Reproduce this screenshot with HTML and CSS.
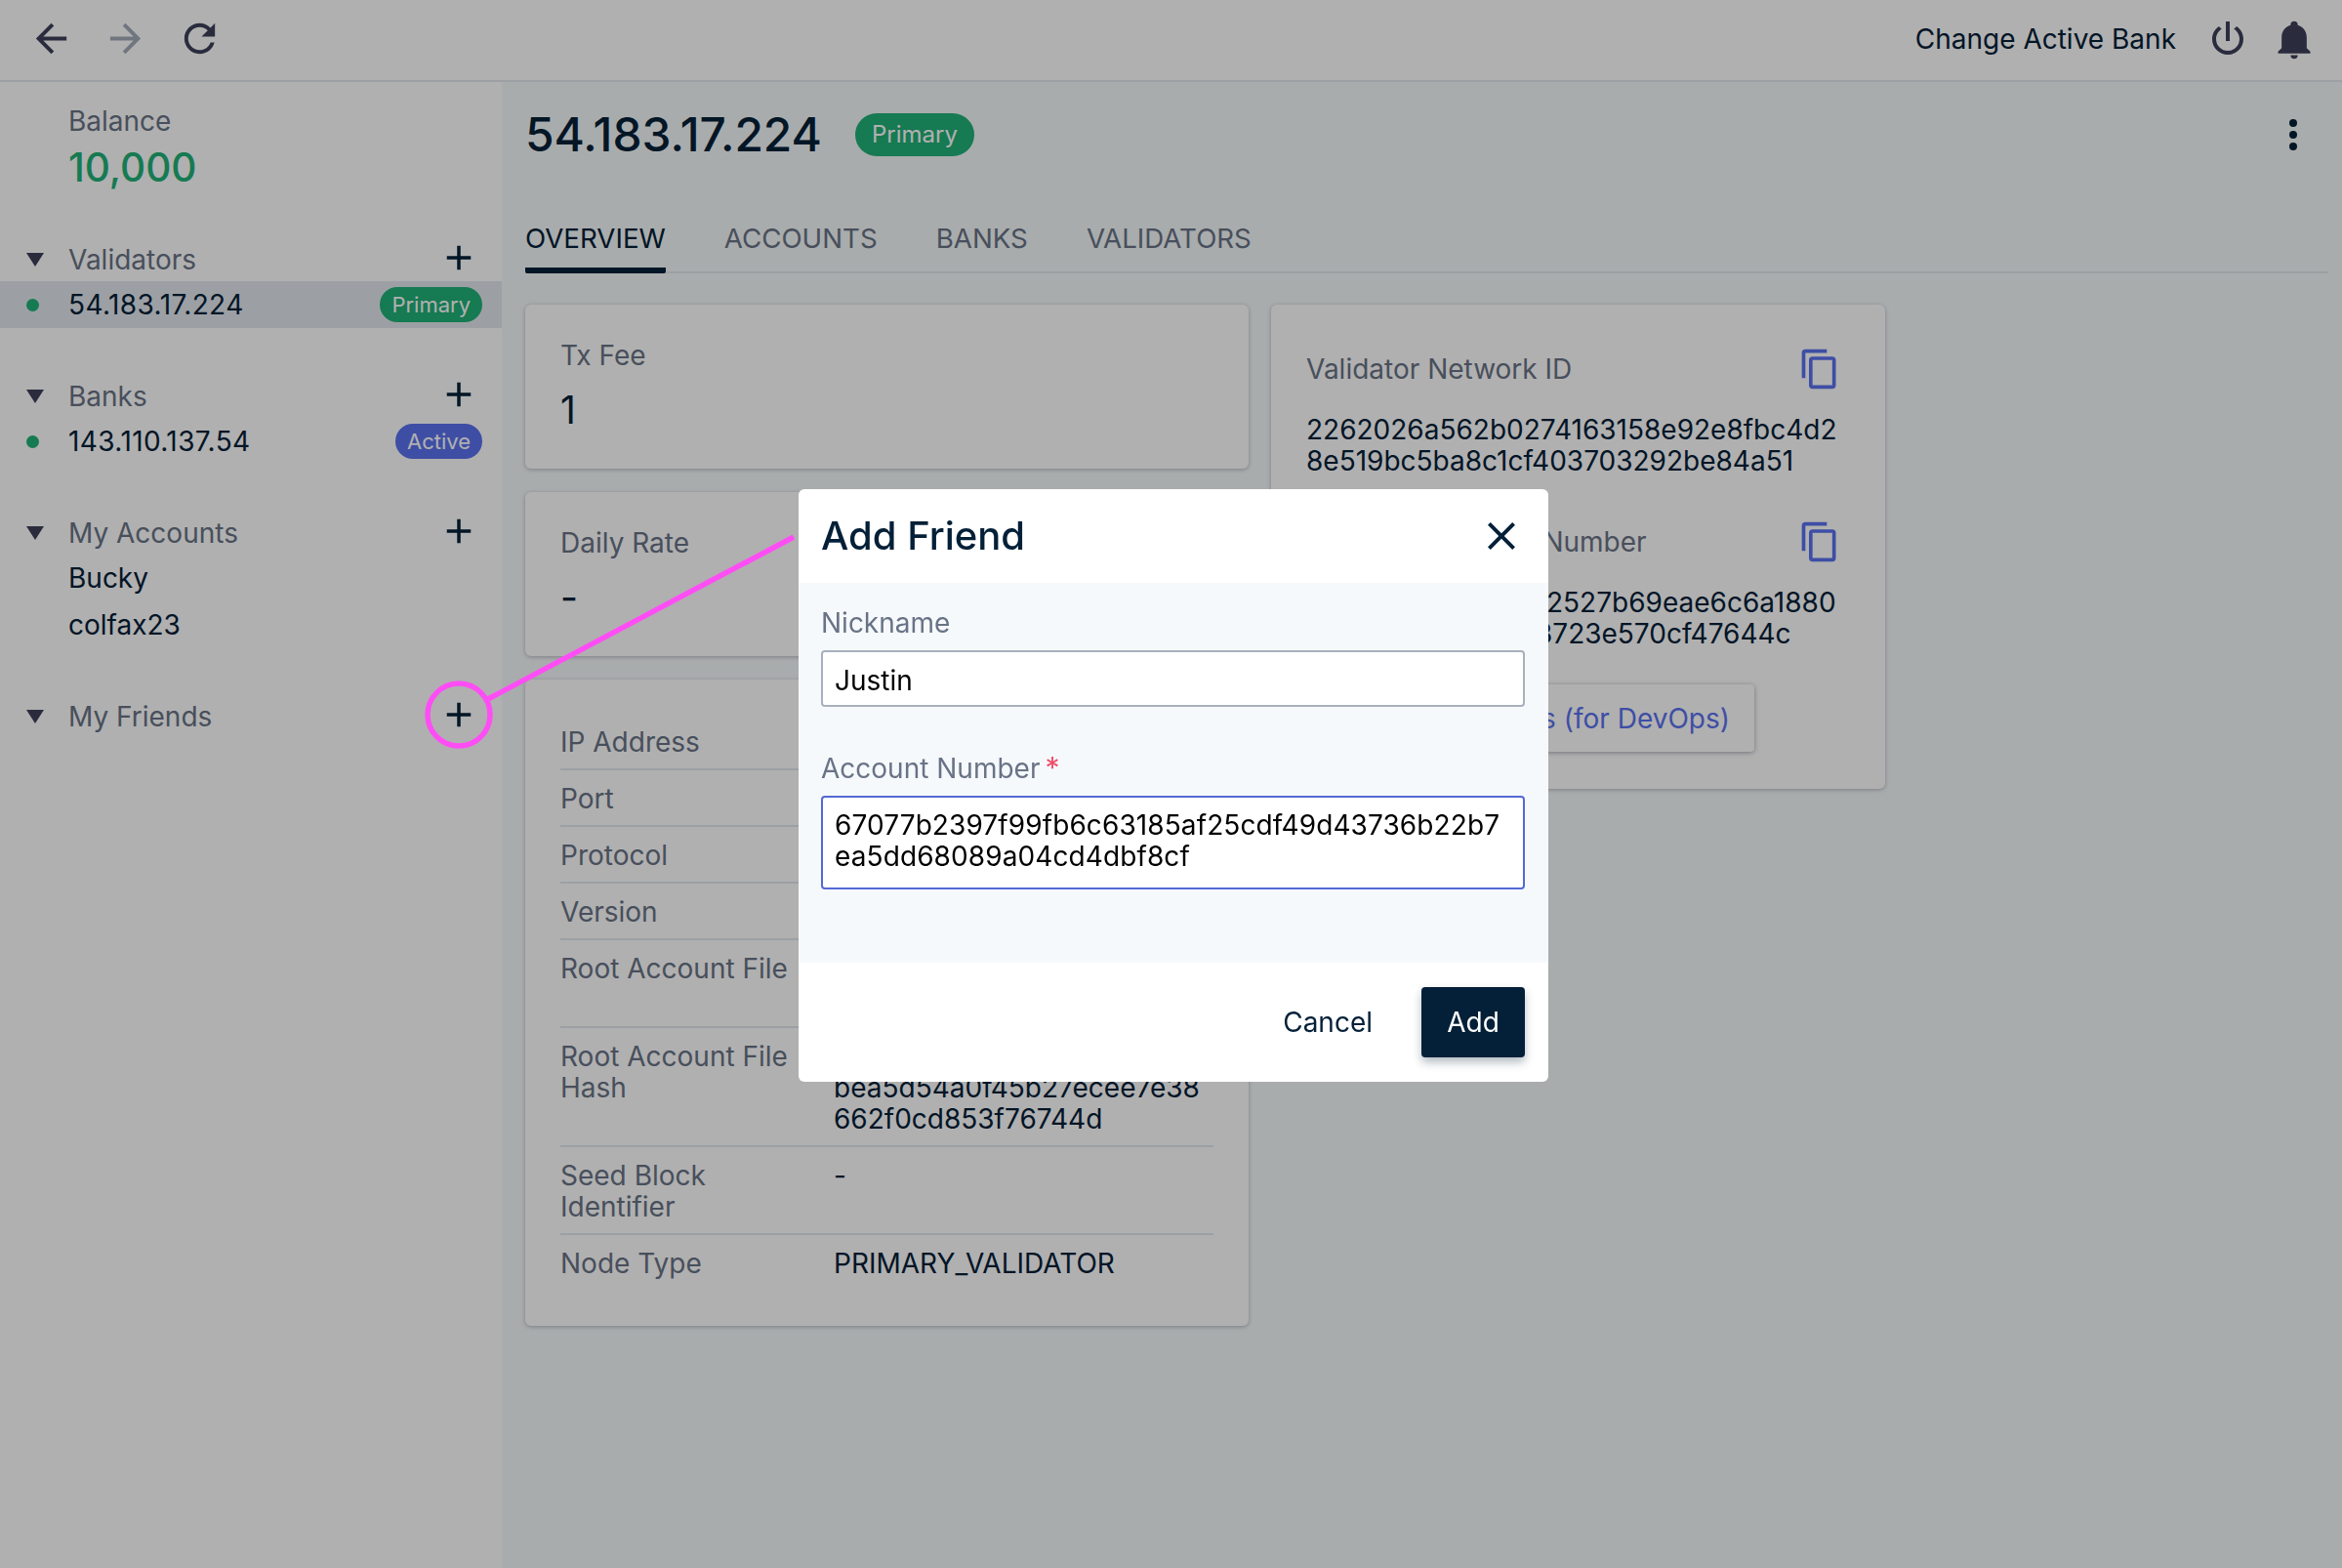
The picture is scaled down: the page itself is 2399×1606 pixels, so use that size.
FILE: index.html
```html
<!DOCTYPE html>
<html lang="en">
<head>
<meta charset="utf-8">
<title>Add Friend</title>
<link rel="stylesheet" href="styles.css">
</head>
<body>
<header class="topbar">
  <div class="topbar-nav">
    <svg class="icon icon-nav" viewBox="0 0 24 24"><path d="M20 11H7.83l5.59-5.59L12 4l-8 8 8 8 1.41-1.41L7.83 13H20v-2z"/></svg>
    <svg class="icon icon-nav icon-disabled" viewBox="0 0 24 24"><path d="M4 11h12.17l-5.59-5.59L12 4l8 8-8 8-1.41-1.41L16.17 13H4v-2z"/></svg>
    <svg class="icon icon-nav" viewBox="0 0 24 24"><path d="M17.65 6.35C16.2 4.9 14.21 4 12 4c-4.42 0-7.99 3.58-7.99 8s3.57 8 7.99 8c3.73 0 6.84-2.55 7.73-6h-2.08c-.82 2.33-3.04 4-5.65 4-3.31 0-6-2.69-6-6s2.69-6 6-6c1.66 0 3.14.69 4.22 1.78L13 11h7V4l-2.35 2.35z"/></svg>
  </div>
  <div class="topbar-actions">
    <span class="change-bank">Change Active Bank</span>
    <svg class="icon icon-power" viewBox="0 0 24 24"><path d="M16.56,5.44L15.11,6.89C16.84,7.94 18,9.83 18,12A6,6 0 0,1 12,18A6,6 0 0,1 6,12C6,9.83 7.16,7.94 8.88,6.88L7.44,5.44C5.36,6.88 4,9.28 4,12A8,8 0 0,0 12,20A8,8 0 0,0 20,12C20,9.28 18.64,6.88 16.56,5.44M13,3H11V13H13"/></svg>
    <svg class="icon icon-bell" viewBox="0 0 24 24"><path d="M21,19V20H3V19L5,17V11C5,7.9 7.03,5.17 10,4.29C10,4.19 10,4.1 10,4A2,2 0 0,1 12,2A2,2 0 0,1 14,4C14,4.1 14,4.19 14,4.29C16.97,5.17 19,7.9 19,11V17L21,19M14,21A2,2 0 0,1 12,23A2,2 0 0,1 10,21"/></svg>
  </div>
</header>

<div class="layout">
  <aside class="sidebar">
    <div class="balance">
      <div class="balance-label">Balance</div>
      <div class="balance-value">10,000</div>
    </div>

    <section class="side-section">
      <div class="side-head">
        <svg class="caret" viewBox="0 0 18 14"><path d="M0 0H18L9 14Z"/></svg>
        <span class="side-title">Validators</span>
        <svg class="icon icon-plus" viewBox="0 0 24 24"><path d="M19,13H13V19H11V13H5V11H11V5H13V11H19V13Z"/></svg>
      </div>
      <div class="side-item side-item-active">
        <span class="dot"></span>
        <span class="side-text side-text-num">54.183.17.224</span>
        <span class="badge badge-green">Primary</span>
      </div>
    </section>

    <section class="side-section">
      <div class="side-head">
        <svg class="caret" viewBox="0 0 18 14"><path d="M0 0H18L9 14Z"/></svg>
        <span class="side-title">Banks</span>
        <svg class="icon icon-plus" viewBox="0 0 24 24"><path d="M19,13H13V19H11V13H5V11H11V5H13V11H19V13Z"/></svg>
      </div>
      <div class="side-item">
        <span class="dot"></span>
        <span class="side-text side-text-num">143.110.137.54</span>
        <span class="badge badge-blue">Active</span>
      </div>
    </section>

    <section class="side-section">
      <div class="side-head">
        <svg class="caret" viewBox="0 0 18 14"><path d="M0 0H18L9 14Z"/></svg>
        <span class="side-title">My Accounts</span>
        <svg class="icon icon-plus" viewBox="0 0 24 24"><path d="M19,13H13V19H11V13H5V11H11V5H13V11H19V13Z"/></svg>
      </div>
      <div class="side-item"><span class="side-text side-text-plain">Bucky</span></div>
      <div class="side-item"><span class="side-text side-text-plain">colfax23</span></div>
    </section>

    <section class="side-section">
      <div class="side-head">
        <svg class="caret" viewBox="0 0 18 14"><path d="M0 0H18L9 14Z"/></svg>
        <span class="side-title">My Friends</span>
        <svg class="icon icon-plus" viewBox="0 0 24 24"><path d="M19,13H13V19H11V13H5V11H11V5H13V11H19V13Z"/></svg>
      </div>
    </section>
  </aside>

  <main class="main">
    <div class="page-head">
      <h1 class="page-title">54.183.17.224</h1>
      <span class="badge badge-green badge-large">Primary</span>
      <svg class="icon icon-dots" viewBox="0 0 24 24"><path d="M12,16A2,2 0 0,1 14,18A2,2 0 0,1 12,20A2,2 0 0,1 10,18A2,2 0 0,1 12,16M12,10A2,2 0 0,1 14,12A2,2 0 0,1 12,14A2,2 0 0,1 10,12A2,2 0 0,1 12,10M12,4A2,2 0 0,1 14,6A2,2 0 0,1 12,8A2,2 0 0,1 10,6A2,2 0 0,1 12,4Z"/></svg>
    </div>

    <nav class="tabs">
      <span class="tab tab-active">OVERVIEW</span>
      <span class="tab">ACCOUNTS</span>
      <span class="tab">BANKS</span>
      <span class="tab">VALIDATORS</span>
    </nav>

    <div class="columns">
      <div class="col col-left">
        <div class="card card-stat">
          <div class="label">Tx Fee</div>
          <div class="stat-value">1</div>
        </div>
        <div class="card card-stat">
          <div class="label">Daily Rate</div>
          <div class="stat-value">-</div>
        </div>
        <div class="card card-table">
          <div class="row"><div class="label">IP Address</div><div class="value"></div></div>
          <div class="row"><div class="label">Port</div><div class="value"></div></div>
          <div class="row"><div class="label">Protocol</div><div class="value"></div></div>
          <div class="row"><div class="label">Version</div><div class="value"></div></div>
          <div class="row row-tall"><div class="label">Root Account File</div><div class="value"></div></div>
          <div class="row"><div class="label">Root Account File Hash</div><div class="value value-offset">bea5d54a0f45b27ecee7e38662f0cd853f76744d</div></div>
          <div class="row"><div class="label">Seed Block Identifier</div><div class="value">-</div></div>
          <div class="row row-last"><div class="label">Node Type</div><div class="value">PRIMARY_VALIDATOR</div></div>
        </div>
      </div>

      <div class="card card-keys">
        <div class="key-head">
          <span class="label">Validator Network ID</span>
          <svg class="icon icon-copy" viewBox="0 0 24 24"><path d="M19,21H8V7H19M19,5H8A2,2 0 0,0 6,7V21A2,2 0 0,0 8,23H19A2,2 0 0,0 21,21V7A2,2 0 0,0 19,5M16,1H4A2,2 0 0,0 2,3V17H4V3H16V1Z"/></svg>
        </div>
        <div class="hash">2262026a562b0274163158e92e8fbc4d28e519bc5ba8c1cf403703292be84a51</div>
        <div class="key-head key-head-second">
          <span class="label">Validator Account Number</span>
          <svg class="icon icon-copy" viewBox="0 0 24 24"><path d="M19,21H8V7H19M19,5H8A2,2 0 0,0 6,7V21A2,2 0 0,0 8,23H19A2,2 0 0,0 21,21V7A2,2 0 0,0 19,5M16,1H4A2,2 0 0,0 2,3V17H4V3H16V1Z"/></svg>
        </div>
        <div class="hash hash-clipped">
          <div>2527b69eae6c6a1880</div>
          <div class="hash-line-second">3723e570cf47644c</div>
        </div>
        <div class="keys-button">Keys (for DevOps)</div>
      </div>
    </div>
  </main>
</div>

<div class="scrim"></div>

<svg class="annotation" viewBox="0 0 2399 1606">
  <circle class="annotation-stroke" cx="470" cy="732" r="32"/>
  <line class="annotation-stroke" x1="500" y1="716" x2="813" y2="550"/>
</svg>

<div class="modal">
  <div class="modal-head">
    <h2 class="modal-title">Add Friend</h2>
    <svg class="icon icon-close" viewBox="0 0 24 24"><path d="M19,6.41L17.59,5L12,10.59L6.41,5L5,6.41L10.59,12L5,17.59L6.41,19L12,13.41L17.59,19L19,17.59L13.41,12L19,6.41Z"/></svg>
  </div>
  <div class="modal-body">
    <label class="field-label">Nickname</label>
    <input class="field-input" type="text" value="Justin">
    <label class="field-label field-label-second">Account Number<span class="required">*</span></label>
    <textarea class="field-input field-area" spellcheck="false">67077b2397f99fb6c63185af25cdf49d43736b22b7ea5dd68089a04cd4dbf8cf</textarea>
  </div>
  <div class="modal-foot">
    <span class="btn-cancel">Cancel</span>
    <span class="btn-add">Add</span>
  </div>
</div>
</body>
</html>
```

FILE: styles.css
```css
* { box-sizing: border-box; }

html, body { height: 100%; }

body {
  margin: 0;
  height: 1606px;
  overflow: hidden;
  display: flex;
  flex-direction: column;
  background: #fff;
  color: #042038;
  font-family: Inter, "Noto Sans", sans-serif;
  font-size: 28px;
  line-height: 32px;
}

.icon { display: block; flex: none; fill: #3d405b; }

.topbar {
  flex: none;
  height: 84px;
  display: flex;
  align-items: center;
  justify-content: space-between;
  border-bottom: 2px solid #e3e8ee;
  padding: 0 27px 3px 29px;
}
.topbar-nav { display: flex; align-items: center; gap: 29px; }
.icon-nav { width: 47px; height: 47px; }
.icon-disabled { fill: #a3abb8; }
.topbar-actions { display: flex; align-items: center; }
.change-bank { margin-right: 29px; }
.icon-power { width: 48px; height: 48px; margin-right: 22px; }
.icon-bell { width: 44px; height: 44px; }

.layout { flex: 1; display: flex; min-height: 0; }

.sidebar { flex: none; width: 514px; background: #fff; }
.balance { padding: 24px 0 0 70px; height: 158px; }
.balance-label { color: #697386; }
.balance-value { margin-top: 8px; color: #21b177; font-size: 40.5px; line-height: 48px; font-weight: 500; }

.side-section { margin-bottom: 46px; }
.side-head { height: 46px; display: flex; align-items: center; padding: 2px 20px 0 27px; }
.caret { width: 18px; height: 14px; flex: none; fill: #3d405b; margin-top: -1px; }
.side-title { margin-left: 25px; flex: 1; color: #697386; }
.icon-plus { width: 42px; height: 42px; fill: #042038; margin-top: -4px; margin-right: 3px; }

.side-item { height: 48px; display: flex; align-items: center; padding: 0 20px 0 27px; }
.side-item-active { background: #e3e8ee; }
.dot { width: 13px; height: 13px; border-radius: 50%; background: #21b177; flex: none; }
.side-text { margin-left: 30px; flex: 1; }
.side-text-num { letter-spacing: .4px; }
.side-text-plain { margin-left: 43px; }

.badge {
  display: inline-flex;
  align-items: center;
  height: 36px;
  padding: 0 12px;
  border-radius: 18px;
  font-size: 22px;
  line-height: 36px;
  color: #fff;
  flex: none;
}
.badge-green { background: #21b177; }
.badge-blue { background: #5b72ef; }
.badge-large { height: 44px; padding: 0 17px; border-radius: 22px; font-size: 24px; margin-left: 34px; }

.main { flex: 1; min-width: 0; background: #f5f9fa; padding: 0 14px 0 24px; }

.page-head { height: 108px; display: flex; align-items: center; padding-right: 12px; }
.page-title { margin: 0; font-size: 47.8px; line-height: 60px; font-weight: 500; color: #042038; }
.icon-dots { width: 48px; height: 48px; fill: #042038; margin-left: auto; }

.tabs {
  margin-top: 26px;
  height: 62px;
  display: flex;
  gap: 60px;
  border-bottom: 2px solid #e3e8ee;
  font-size: 27.7px;
}
.tab { height: 62px; padding-top: 10px; color: #697386; }
.tab-active { color: #042038; border-bottom: 6px solid #042038; border-radius: 6px 6px 2px 2px; }

.columns { margin-top: 32px; display: flex; gap: 23px; align-items: flex-start; }
.col { display: flex; flex-direction: column; gap: 24px; width: 741px; flex: none; }

.card { background: #fff; border-radius: 6px; box-shadow: 0 1px 4px rgba(60, 66, 87, .35); }
.label { color: #697386; }

.card-stat { height: 168px; padding: 36px 36px 0; }
.stat-value { margin-top: 16px; font-size: 39px; line-height: 48px; }

.card-table { height: 662px; padding: 35px 36px 0; }
.row {
  display: grid;
  grid-template-columns: 261px 1fr;
  column-gap: 19px;
  min-height: 58px;
  padding: 13px 0 11px;
  border-bottom: 2px solid #e3e8ee;
}
.row-tall { min-height: 90px; }
.row-last { border-bottom: 0; }
.value-offset { padding-top: 32px; word-break: break-all; }

.card-keys { width: 629px; height: 496px; padding: 50px 38px 0 36px; }
.key-head { display: flex; align-items: center; justify-content: space-between; height: 32px; padding-right: 7px; }
.icon-copy { width: 44px; height: 44px; fill: #5b72ef; }
.key-head-second { margin-top: 51px; }
.hash { margin-top: 30px; word-break: break-all; }
.hash-clipped { padding-left: 246px; }
.hash-line-second { margin-left: -11px; }
.keys-button {
  margin-top: 36px;
  width: 459px;
  height: 69px;
  padding: 0 25px;
  display: flex;
  align-items: center;
  justify-content: flex-end;
  background: #fff;
  border-radius: 4px;
  color: #5b72ef;
  box-shadow: 0 1px 5px rgba(60, 66, 87, .45);
}

.scrim { position: fixed; inset: 0; background: rgba(0, 0, 0, .31); }

.annotation { position: fixed; left: 0; top: 0; width: 2399px; height: 1606px; pointer-events: none; }
.annotation-stroke { fill: none; stroke: #ff4df5; stroke-width: 5.5; }

.modal {
  position: fixed;
  left: 818px;
  top: 501px;
  width: 768px;
  height: 607px;
  display: flex;
  flex-direction: column;
  background: #fff;
  border-radius: 6px;
  overflow: hidden;
}
.modal-head { flex: none; height: 96px; display: flex; align-items: center; justify-content: space-between; padding: 0 24px 0 23px; }
.modal-title { margin: 0; font-size: 40px; line-height: 48px; font-weight: 500; color: #042038; }
.icon-close { width: 48px; height: 48px; fill: #042038; }

.modal-body { flex: none; height: 389px; background: #f6f9fc; padding: 25px 24px 0 23px; }
.field-label { display: block; color: #697386; height: 32px; }
.field-label-second { margin-top: 46px; }
.required { color: #ef4e6a; font-size: 30px; margin-left: 5px; }
.field-input {
  display: block;
  width: 721px;
  height: 58px;
  margin-top: 12px;
  padding: 4px 12px 0;
  border: 2px solid #a8b0bd;
  border-radius: 4px;
  background: #fff;
  color: #000;
  font: inherit;
  outline: 0;
}
.field-area {
  height: 96px;
  margin-top: 13px;
  padding: 12px 20px 12px 12px;
  border-color: #5469d4;
  letter-spacing: .1px;
  resize: none;
  overflow: hidden;
}

.modal-foot { flex: 1; display: flex; align-items: flex-start; justify-content: flex-end; padding: 25px 24px 0 0; }
.btn-cancel { height: 72px; line-height: 72px; margin-right: 50px; color: #042038; }
.btn-add {
  width: 106px;
  height: 72px;
  line-height: 72px;
  text-align: center;
  background: #042038;
  color: #fff;
  border-radius: 4px;
  box-shadow: 0 5px 10px rgba(4, 32, 56, .3);
}
```
